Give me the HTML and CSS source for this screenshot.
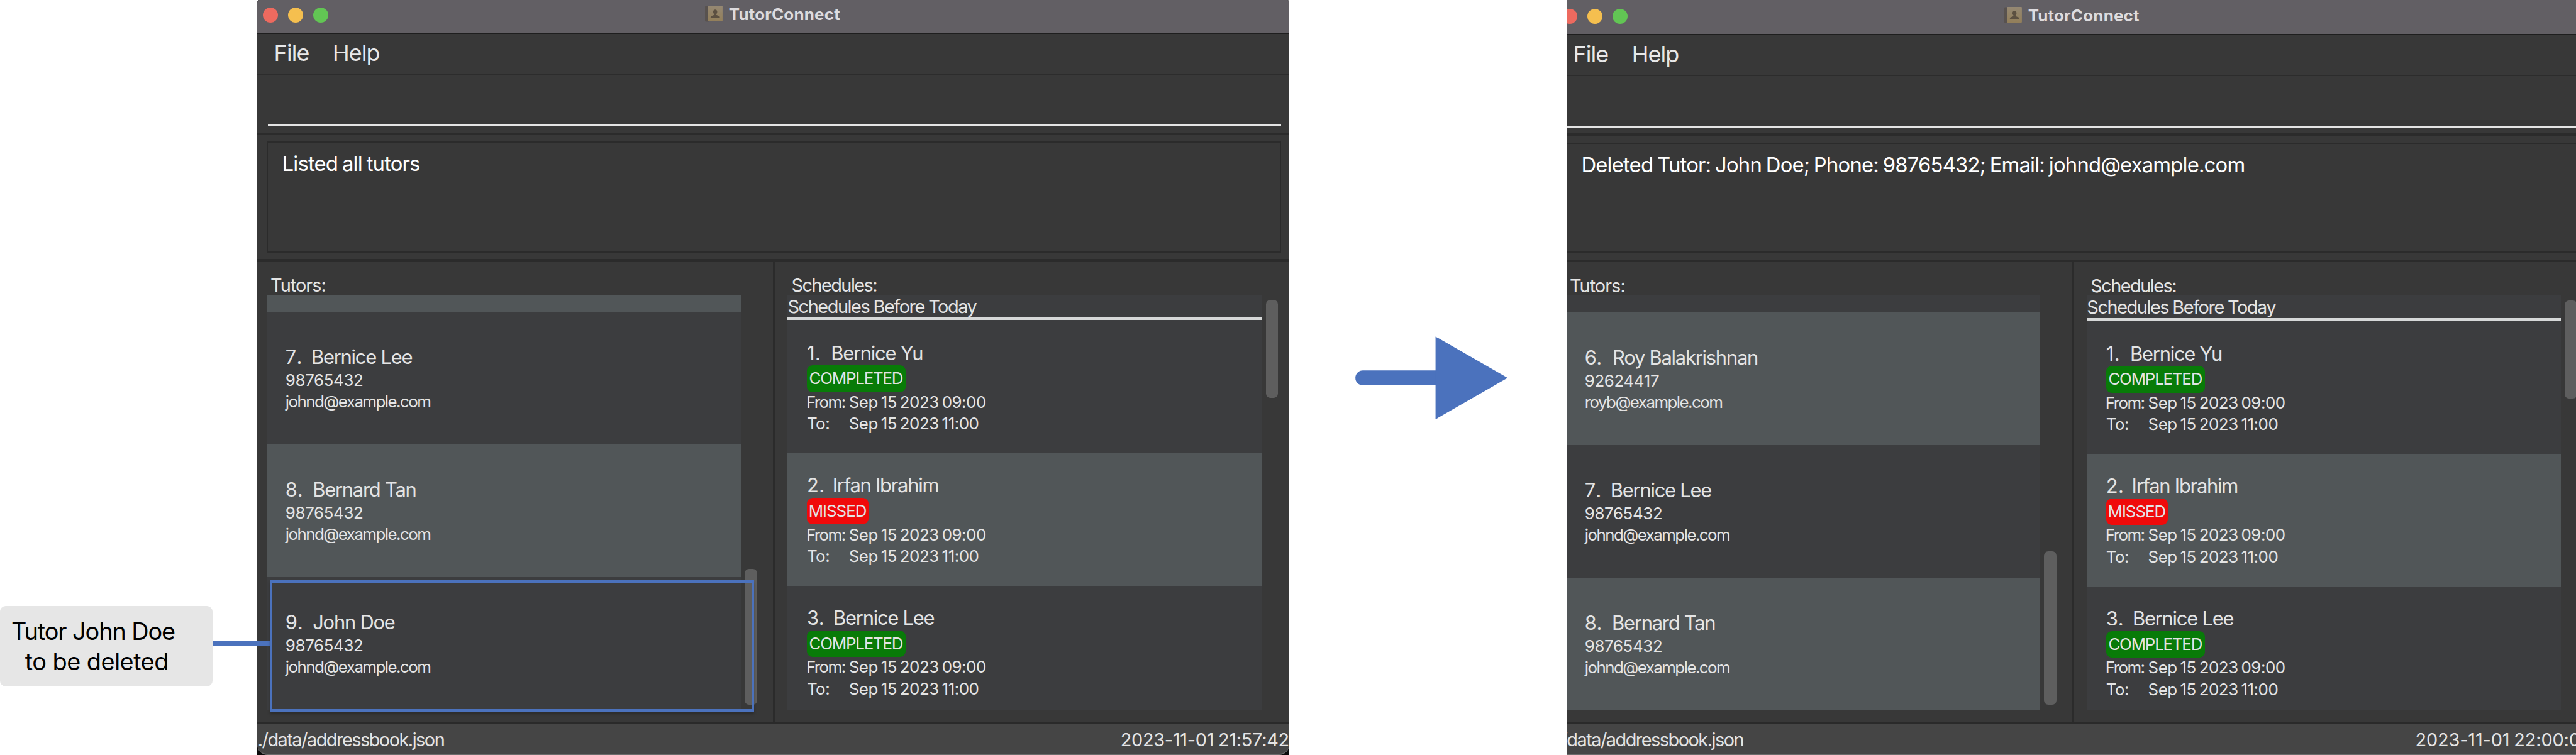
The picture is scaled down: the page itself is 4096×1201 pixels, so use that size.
FILE: index.html
```
<!DOCTYPE html>
<html lang="en">
<head>
<meta charset="utf-8">
<title>TutorConnect</title>
<link rel="stylesheet" href="styles.css">
</head>
<body>
<main class="stage">
  <aside class="note-col">
    <p class="note"><span>Tutor John Doe</span><span class="note-second">to be deleted</span></p>
  </aside>

  <section class="clip clip-before">
    <div class="window before">
      <header class="titlebar">
        <div class="lights"><i class="light red"></i><i class="light yellow"></i><i class="light green"></i></div>
        <svg class="app-icon" viewBox="0 0 28 26"><defs><linearGradient id="book" x1="0" y1="0" x2="0" y2="1"><stop offset="0" stop-color="#958873"/><stop offset="1" stop-color="#937f5a"/></linearGradient></defs><rect x="0" y="0.5" width="7" height="25" rx="1.5" fill="#58524f"/><rect x="4.5" y="0" width="23.5" height="25" rx="1" fill="url(#book)"/><path d="M16.2 6.2c2 0 3.3 1.5 3.3 3.7 0 1.5-.6 2.9-1.5 3.6v1.3l4.3 1.7c1 .4 1.4 1.1 1.4 2.5H8.9c0-1.400.4-2.100 1.400-2.500l4.200-1.700v-1.300c-.9-.7-1.500-2.100-1.500-3.600 0-2.200 1.200-3.700 3.200-3.700z" fill="#5c5041"/></svg>
        <h1 class="title">TutorConnect</h1>
      </header>
      <nav class="menubar"><span>File</span><span>Help</span></nav>
      <div class="command"><div class="input"></div></div>
      <div class="result"><div class="result-box">Listed all tutors</div></div>
      <div class="panes">
        <div class="pane tutors">
          <h2>Tutors:</h2>
          <div class="scroller">
            <div class="list">
              <div class="row alt sliver"></div>
              <div class="row"><p class="name"><span class="idx i7">7.</span>Bernice Lee</p><p class="num">98765432</p><p class="mail">johnd@example.com</p></div>
              <div class="row alt"><p class="name"><span class="idx i8">8.</span>Bernard Tan</p><p class="num">98765432</p><p class="mail">johnd@example.com</p></div>
              <div class="row"><p class="name"><span class="idx i9">9.</span>John Doe</p><p class="num">98765432</p><p class="mail">johnd@example.com</p></div>
            </div>
            <div class="thumb"></div>
          </div>
        </div>
        <div class="pane schedules">
          <h2>Schedules:</h2>
          <div class="scroller">
            <div class="list">
              <h3>Schedules Before Today</h3>
              <div class="row slot first"><p class="name"><span class="idx i1">1.</span>Bernice Yu</p><p class="badge done">COMPLETED</p><p class="time"><span class="key from">From:</span>Sep 15 2023 09:00</p><p class="time"><span class="key">To:</span>Sep 15 2023 11:00</p></div>
              <div class="row slot alt"><p class="name"><span class="idx i2">2.</span>Irfan Ibrahim</p><p class="badge missed">MISSED</p><p class="time"><span class="key from">From:</span>Sep 15 2023 09:00</p><p class="time"><span class="key">To:</span>Sep 15 2023 11:00</p></div>
              <div class="row slot"><p class="name"><span class="idx i3">3.</span>Bernice Lee</p><p class="badge done">COMPLETED</p><p class="time"><span class="key from">From:</span>Sep 15 2023 09:00</p><p class="time"><span class="key">To:</span>Sep 15 2023 11:00</p></div>
            </div>
            <div class="thumb"></div>
          </div>
        </div>
      </div>
      <footer class="status"><span class="path">./data/addressbook.json</span><span class="clock">2023-11-01 21:57:42</span></footer>
    </div>
  </section>

  <div class="gap">
    <svg class="arrow" viewBox="0 0 243 133"><path d="M12 54.500H130V78.200H12A11.850 11.850 0 0 1 12 54.500z"/><path d="M128 .400L243 66.400 128 132.500z"/></svg>
  </div>

  <section class="clip clip-after">
    <div class="window after">
      <header class="titlebar">
        <div class="lights"><i class="light red"></i><i class="light yellow"></i><i class="light green"></i></div>
        <svg class="app-icon" viewBox="0 0 28 26"><rect x="0" y="0.5" width="7" height="25" rx="1.5" fill="#58524f"/><rect x="4.5" y="0" width="23.5" height="25" rx="1" fill="url(#book)"/><path d="M16.2 6.2c2 0 3.3 1.5 3.3 3.7 0 1.5-.6 2.9-1.5 3.6v1.3l4.3 1.7c1 .4 1.4 1.1 1.4 2.5H8.9c0-1.400.4-2.100 1.400-2.500l4.200-1.700v-1.300c-.9-.7-1.500-2.100-1.500-3.600 0-2.200 1.200-3.700 3.200-3.700z" fill="#5c5041"/></svg>
        <h1 class="title">TutorConnect</h1>
      </header>
      <nav class="menubar"><span>File</span><span>Help</span></nav>
      <div class="command"><div class="input"></div></div>
      <div class="result"><div class="result-box">Deleted Tutor: John Doe; Phone: 98765432; Email: johnd@example.com</div></div>
      <div class="panes">
        <div class="pane tutors">
          <h2>Tutors:</h2>
          <div class="scroller">
            <div class="list">
              <div class="row sliver"></div>
              <div class="row alt"><p class="name"><span class="idx i6">6.</span>Roy Balakrishnan</p><p class="num">92624417</p><p class="mail">royb@example.com</p></div>
              <div class="row"><p class="name"><span class="idx i7">7.</span>Bernice Lee</p><p class="num">98765432</p><p class="mail">johnd@example.com</p></div>
              <div class="row alt"><p class="name"><span class="idx i8">8.</span>Bernard Tan</p><p class="num">98765432</p><p class="mail">johnd@example.com</p></div>
            </div>
            <div class="thumb"></div>
          </div>
        </div>
        <div class="pane schedules">
          <h2>Schedules:</h2>
          <div class="scroller">
            <div class="list">
              <h3>Schedules Before Today</h3>
              <div class="row slot first"><p class="name"><span class="idx i1">1.</span>Bernice Yu</p><p class="badge done">COMPLETED</p><p class="time"><span class="key from">From:</span>Sep 15 2023 09:00</p><p class="time"><span class="key">To:</span>Sep 15 2023 11:00</p></div>
              <div class="row slot alt"><p class="name"><span class="idx i2">2.</span>Irfan Ibrahim</p><p class="badge missed">MISSED</p><p class="time"><span class="key from">From:</span>Sep 15 2023 09:00</p><p class="time"><span class="key">To:</span>Sep 15 2023 11:00</p></div>
              <div class="row slot"><p class="name"><span class="idx i3">3.</span>Bernice Lee</p><p class="badge done">COMPLETED</p><p class="time"><span class="key from">From:</span>Sep 15 2023 09:00</p><p class="time"><span class="key">To:</span>Sep 15 2023 11:00</p></div>
            </div>
            <div class="thumb"></div>
          </div>
        </div>
      </div>
      <footer class="status"><span class="path">./data/addressbook.json</span><span class="clock">2023-11-01 22:00:0</span></footer>
    </div>
  </section>

  <div class="connector"></div>
  <div class="highlight"></div>
</main>
</body>
</html>
```
FILE: styles.css
```
* { box-sizing: border-box; }
html, body { margin: 0; overflow: hidden; background: #fff; }
h1, h2, h3, p { margin: 0; font-weight: 400; }

.stage {
  zoom: 0.99684;
  position: relative;
  display: flex;
  width: 4109px;
  height: 1205px;
  overflow: hidden;
  font-family: Inter, "Liberation Sans", sans-serif;
  color: #e4e4e4;
  white-space: nowrap;
}

/* callout on the far left */
.note-col { flex: none; width: 410px; padding-top: 967px; }
.note {
  display: flex;
  flex-direction: column;
  width: 339px;
  height: 128px;
  padding: 17px 0 0 18px;
  border-radius: 9px;
  background: #e6e6e6;
  color: #000;
  font-size: 38px;
  line-height: 48px;
  letter-spacing: -1.1px;
}
.note-second { padding-left: 22px; letter-spacing: -0.55px; }
.connector { position: absolute; left: 339px; top: 1023px; width: 92px; height: 8px; background: #4b72bd; }
.highlight {
  position: absolute;
  left: 430px;
  top: 926px;
  width: 773px;
  height: 210px;
  border: 4.050px solid #4b72bd;
  box-shadow: 0 4px 4px rgba(0, 0, 0, 0.22);
}

/* arrow between the windows */
.gap { flex: none; width: 443.2px; padding: 536.5px 0 0 106px; }
.arrow { display: block; width: 243px; height: 133px; fill: #4b72bd; }

/* window shell */
.clip { flex: none; height: 1205px; overflow: hidden; }
.clip-before { width: 1646px; border-radius: 4px 4px 0 0; background: #0c0c0c; }
.clip-after { width: 1610px; }
.window { display: flex; flex-direction: column; width: 1646px; height: 1205px; background: #383838; overflow: hidden; }
.before { border-radius: 0 0 16px 16px; }
.after { margin-left: -16.8px; }

.titlebar { display: flex; flex: none; height: 54px; padding: 9.500px 0 0 9px; background: #625f64; border-bottom: 2.050px solid #1e1e1e; }
.lights { display: flex; gap: 16px; width: 706px; padding-top: 2.500px; }
.light { width: 24.300px; height: 24.300px; border-radius: 50%; }
.red { background: #ed6a5f; }
.yellow { background: #f5bf4f; }
.green { background: #62c554; }
.app-icon { width: 28px; height: 26px; }
.title { margin-left: 9.500px; padding-top: 0.500px; font-size: 26px; font-weight: 700; line-height: 26px; letter-spacing: 0.2px; color: #dddbde; }
.after .titlebar { height: 56px; padding-top: 11.500px; }

.menubar { display: flex; flex: none; gap: 37.500px; height: 65px; padding-left: 27px; border-bottom: 2.050px solid #2c2c2c; font-size: 36px; line-height: 62px; letter-spacing: -0.9px; color: #e8e8e8; }

.command { flex: none; height: 97px; padding: 0 13px 0 17px; border-bottom: 4.050px solid #2b2b2b; }
.input { height: 83px; border-bottom: 3.050px solid #e4e4e4; }
.after .command { height: 96px; }
.after .input { height: 82.500px; }

.result { flex: none; height: 201px; padding: 10px 13px 0 15.500px; border-bottom: 4.050px solid #2b2b2b; }
.result-box { height: 177px; padding: 13.500px 0 0 22.500px; border: 2.050px solid #2b2b2b; font-size: 33px; line-height: 40px; letter-spacing: -0.860px; word-spacing: -1.500px; color: #fff; }
.after .result { padding-top: 10.500px; }
.after .result-box { height: 176px; padding-top: 14px; }

/* panes */
.panes { display: flex; flex: none; height: 737.500px; border-bottom: 2.050px solid #2a2a2a; }
.after .panes { height: 737px; }
.pane h2 { height: 54px; padding-top: 20px; font-size: 29px; line-height: 36px; }
.tutors { width: 826px; padding-left: 15px; border-right: 3.500px solid #2b2b2b; }
.tutors h2 { padding-left: 6.500px; letter-spacing: -0.97px; }
.schedules { padding-left: 20px; }
.schedules h2 { padding-left: 6.500px; letter-spacing: -1.560px; }
.scroller { display: flex; height: 661.500px; }
.after .scroller { height: 660.500px; }
.list { height: 100%; overflow: hidden; background: #3c3d3f; }
.tutors .list { width: 756.700px; }
.schedules .list { width: 757px; }
.thumb { width: 20px; margin-left: 6px; border-radius: 7px; background: #5e5e5e; }
.tutors .thumb { height: 217px; margin-top: 436.500px; }
.after .tutors .thumb { height: 245px; margin-top: 407.500px; }
.schedules .thumb { height: 156px; margin-top: 8px; }

.row { height: 211.600px; padding: 53px 0 0 30.300px; background: #3c3d3f; }
.row.alt { background: #515658; }
.row.sliver { height: 26.700px; padding: 0; }
.name { font-size: 31px; line-height: 39px; letter-spacing: -1.240px; }
.idx { display: inline-block; letter-spacing: 0.500px; }
.i1 { width: 38.400px; }
.i2 { width: 41px; }
.i3 { width: 42.300px; }
.i6 { width: 44.500px; }
.i7 { width: 41.200px; letter-spacing: 4px; }
.i8, .i9 { width: 43.500px; }
.num, .mail { font-size: 26px; line-height: 34px; }
.num { letter-spacing: -0.380px; }
.mail { letter-spacing: -1.560px; }

.schedules h3 { height: 39.200px; padding: 1.200px 0 0 0.500px; border-bottom: 4.050px solid #d6d8d8; font-size: 29px; line-height: 34.400px; letter-spacing: -1.450px; word-spacing: -0.500px; }
.row.slot { padding: 32.600px 0 0 31px; }
.row.slot.first { height: 213px; padding-top: 34.100px; }
.badge { width: 157.700px; height: 42.400px; padding-left: 3.700px; border-radius: 9px; font-size: 26px; line-height: 41.500px; letter-spacing: -1.250px; }
.done { background: #087b08; }
.missed { width: 98.800px; padding-left: 2.800px; background: #f00a0a; letter-spacing: -1.030px; }
.badge + .time { margin-top: -1px; }
.time { font-size: 26px; line-height: 34.600px; letter-spacing: -0.480px; word-spacing: -2px; }
.key { display: inline-block; width: 67px; }
.from { margin-left: -1px; width: 68px; letter-spacing: -1.580px; }

.status { display: flex; flex: 1; padding: 7px 0 0 1px; background: #454545; border-bottom: 2.050px solid #6b6b6b; font-size: 29px; line-height: 38.500px; letter-spacing: -1.520px; }
.before .status { border-radius: 0 0 16px 16px; }
.clock { width: 268.700px; margin-left: auto; letter-spacing: -0.290px; word-spacing: -1px; }
.after .clock { width: 275.800px; letter-spacing: -0.150px; }
```
